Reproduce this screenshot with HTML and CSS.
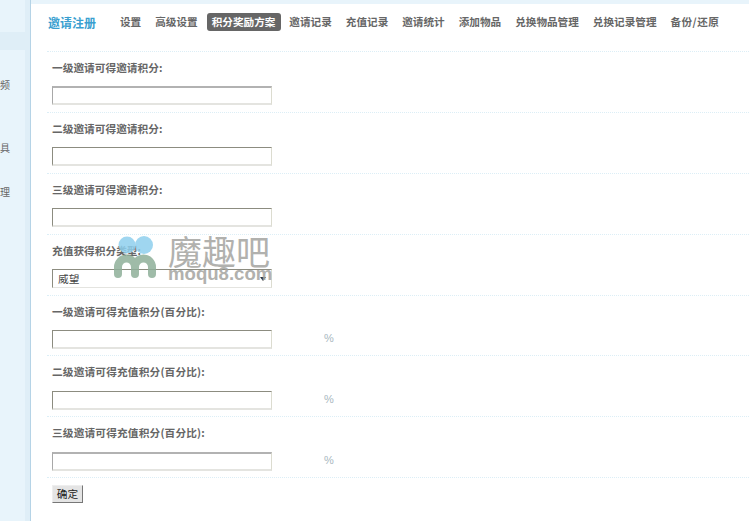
FILE: index.html
```html
<!DOCTYPE html>
<html lang="zh">
<head>
<meta charset="utf-8">
<title>邀请注册</title>
<link rel="stylesheet" href="styles.css">
</head>
<body>
<div class="page">
  <aside class="side">
    <div class="side-active"></div>
    <div class="side-item first">频</div>
    <div class="side-item second">具</div>
    <div class="side-item third">理</div>
  </aside>
  <main class="main">
    <nav class="nav">
      <span class="brand">邀请注册</span>
      <a class="tab">设置</a>
      <a class="tab">高级设置</a>
      <a class="tab on">积分奖励方案</a>
      <a class="tab">邀请记录</a>
      <a class="tab">充值记录</a>
      <a class="tab">邀请统计</a>
      <a class="tab">添加物品</a>
      <a class="tab">兑换物品管理</a>
      <a class="tab">兑换记录管理</a>
      <a class="tab wide">备份/还原</a>
    </nav>
    <form class="form">
      <div class="row"><label class="label">一级邀请可得邀请积分:</label><div class="field"><input class="input soft" type="text"></div></div>
      <div class="row"><label class="label">二级邀请可得邀请积分:</label><div class="field"><input class="input" type="text"></div></div>
      <div class="row"><label class="label">三级邀请可得邀请积分:</label><div class="field"><input class="input" type="text"></div></div>
      <div class="row"><label class="label">充值获得积分类型:</label><div class="field"><div class="select">威望<span class="arrow"></span></div></div></div>
      <div class="row"><label class="label pct">一级邀请可得充值积分(百分比):</label><div class="field"><input class="input" type="text"><span class="unit">%</span></div></div>
      <div class="row"><label class="label pct">二级邀请可得充值积分(百分比):</label><div class="field"><input class="input" type="text"><span class="unit">%</span></div></div>
      <div class="row"><label class="label pct">三级邀请可得充值积分(百分比):</label><div class="field"><input class="input soft" type="text"><span class="unit">%</span></div></div>
      <div class="actions"><button class="btn" type="button">确定</button></div>
    </form>
  </main>
  <div class="mark">
    <svg class="mark-logo" width="44" height="44" viewBox="0 0 44 44">
      <circle cx="13" cy="9" r="8.500" fill="#8fd0ee"/>
      <circle cx="30" cy="9" r="9" fill="#8fd0ee"/>
      <path d="M4 38V31a8.500 8.500 0 0 1 17 0V38M21 31a8.500 8.500 0 0 1 17 0V38" fill="none" stroke="#8fb09a" stroke-width="8" stroke-linecap="round"/>
    </svg>
    <div class="mark-text">
      <div class="mark-cn">魔趣吧</div>
      <div class="mark-en">moqu8.com</div>
    </div>
  </div>
</div>
</body>
</html>
```

FILE: styles.css
```css
* { box-sizing: border-box; }
html, body { margin: 0; padding: 0; }
body {
  background: #fff;
  font-family: "Noto Sans CJK SC", "Liberation Sans", sans-serif;
  font-size: 11px;
  color: #666;
  overflow: hidden;
}
.page {
  position: relative;
  display: flex;
  width: 749px;
  height: 521px;
  overflow: hidden;
}
.side {
  flex: 0 0 31px;
  height: 521px;
  padding-top: 32px;
  background: linear-gradient(to right, #e8f4fb 25px, #dfeef7 25px);
  border-right: 1px solid #b5d3e6;
  color: #666;
  font-size: 10px;
  line-height: 14px;
}
.side-active {
  width: 25px;
  height: 18px;
  background: #dfeef7;
}
.side-item { text-align: left; }
.first { margin-top: 28px; }
.second { margin-top: 49px; }
.third { margin-top: 30px; }
.main {
  flex: 1;
  padding: 0 0 0 16px;
  border-top: 4px solid #e8f4fb;
  min-width: 0;
}
.nav {
  display: flex;
  align-items: center;
  height: 48px;
  padding: 0 0 11px 1px;
  border-bottom: 1px dotted #dceef6;
  white-space: nowrap;
}
.brand {
  width: 67px;
  flex: none;
  color: #3a9fd0;
  font-size: 12px;
  font-weight: 700;
}
.tab {
  flex: none;
  height: 18px;
  line-height: 18px;
  padding: 0 5px;
  margin-right: 4px;
  border-radius: 3px;
  color: #666;
  font-size: 10.62px;
  font-weight: 700;
}
.on { background: #666; color: #fff; padding-right: 5.6px; margin-right: 3.4px; }
.wide { letter-spacing: .45px; }
.row {
  height: 60.9px;
  padding: 8px 0 0 5px;
  border-bottom: 1px dotted #dceef6;
}
.label {
  display: block;
  height: 16px;
  line-height: 16px;
  color: #666;
  font-size: 10.7px;
  font-weight: 700;
}
.pct { letter-spacing: .15px; }
.field {
  display: flex;
  align-items: center;
  margin-top: 10.2px;
}
.input, .select {
  display: block;
  width: 220px;
  height: 19px;
  margin: 0;
  padding: 0 2px;
  background: #fff;
  border: 1px solid;
  border-color: #8c8c80 #dcdcd0 #e4e4e0 #8c8c80;
  border-bottom-width: 2px;
}
.soft {
  border-top: 2px solid #b2b2b2;
  border-left-color: #a8a8a8;
}
.select {
  position: relative;
  padding-left: 5px;
  font-size: 10.7px;
  line-height: 18px;
  color: #444;
  border-bottom-width: 1px;
}
.arrow {
  position: absolute;
  right: 5px;
  top: 7px;
  border: 3px solid transparent;
  border-top: 4px solid #333;
  border-bottom: 0;
}
.unit {
  margin-left: 52px;
  padding-bottom: 2px;
  color: #a9b8c0;
  font-family: "Liberation Sans", sans-serif;
  font-size: 11px;
}
.actions { padding: 7px 0 0 5px; }
.btn {
  display: block;
  width: 31px;
  height: 18px;
  margin: 0;
  padding: 0;
  background: #e4e4e4;
  border: 1px solid;
  border-color: #eee #777 #777 #eee;
  color: #222;
  font-family: inherit;
  font-size: 10.7px;
  line-height: 16px;
}
.mark {
  position: absolute;
  left: 114px;
  top: 236px;
  display: flex;
  gap: 10px;
  opacity: .85;
  pointer-events: none;
}
.mark-cn {
  color: #a4a4a0;
  font-family: "Noto Sans CJK SC", sans-serif;
  font-size: 34px;
  line-height: 30px;
}
.mark-en {
  color: #a4a4a0;
  font-family: "Liberation Sans", sans-serif;
  font-size: 18.6px;
  font-weight: 700;
  line-height: 15px;
}
```
